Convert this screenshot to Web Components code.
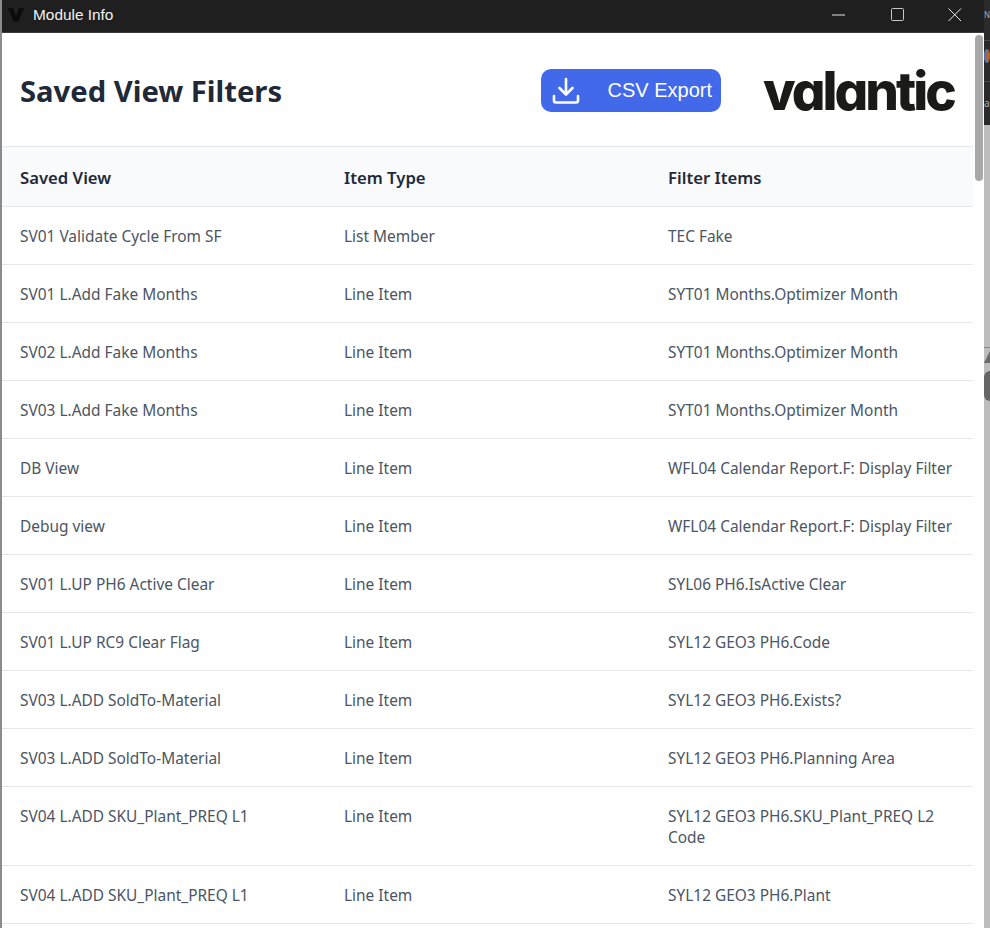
<!DOCTYPE html>
<html><head><meta charset="utf-8"><style>
html,body{margin:0;height:100%;overflow:hidden;background:#bdbdbd}
body{display:flex}
</style></head><body>
<module-window>
<saved-header></saved-header>
<filter-table>
<filter-row head a="Saved View" b="Item Type" c="Filter Items"></filter-row>
<filter-row a="SV01 Validate Cycle From SF" b="List Member" c="TEC Fake"></filter-row>
<filter-row a="SV01 L.Add Fake Months" b="Line Item" c="SYT01 Months.Optimizer Month"></filter-row>
<filter-row a="SV02 L.Add Fake Months" b="Line Item" c="SYT01 Months.Optimizer Month"></filter-row>
<filter-row a="SV03 L.Add Fake Months" b="Line Item" c="SYT01 Months.Optimizer Month"></filter-row>
<filter-row a="DB View" b="Line Item" c="WFL04 Calendar Report.F: Display Filter"></filter-row>
<filter-row a="Debug view" b="Line Item" c="WFL04 Calendar Report.F: Display Filter"></filter-row>
<filter-row a="SV01 L.UP PH6 Active Clear" b="Line Item" c="SYL06 PH6.IsActive Clear"></filter-row>
<filter-row a="SV01 L.UP RC9 Clear Flag" b="Line Item" c="SYL12 GEO3 PH6.Code"></filter-row>
<filter-row a="SV03 L.ADD SoldTo-Material" b="Line Item" c="SYL12 GEO3 PH6.Exists?"></filter-row>
<filter-row a="SV03 L.ADD SoldTo-Material" b="Line Item" c="SYL12 GEO3 PH6.Planning Area"></filter-row>
<filter-row a="SV04 L.ADD SKU_Plant_PREQ L1" b="Line Item" c="SYL12 GEO3 PH6.SKU_Plant_PREQ L2 Code"></filter-row>
<filter-row a="SV04 L.ADD SKU_Plant_PREQ L1" b="Line Item" c="SYL12 GEO3 PH6.Plant"></filter-row>
</filter-table>
</module-window>
<desktop-strip></desktop-strip>
<script>
const F='"Noto Sans","Open Sans",sans-serif';
class ModuleWindow extends HTMLElement{constructor(){super();this.attachShadow({mode:'open'}).innerHTML=`<style>
:host{display:block;flex:none;width:984px;height:928px;overflow:hidden;background:#fff;border-left:2px solid #8c8c8c;box-sizing:border-box;font-family:${F}}
.bar{height:33px;box-sizing:border-box;background:#1f1f1f;border-bottom:1px solid #3a3a3a;display:flex;align-items:center;margin-left:-2px;color:#f2f2f2;font:15.4px/20px "Liberation Sans",sans-serif;padding-bottom:2px}
.logo{margin:0 9px 0 8px;width:16px;height:16px;display:block}
.title{flex:1}
.ctl{width:58px;display:flex;justify-content:center}
.body{display:flex;height:895px}
.main{width:971px;flex:none;overflow:hidden}
.track{flex:1;position:relative}
.thumb{position:absolute;left:2px;top:2px;width:8px;height:146px;background:#a8a8a8;border-radius:4px}
</style>
<div class="bar"><svg class="logo" viewBox="0 0 16 16"><path d="M0 1h5l3 8 3-8h5l-6 14H6z" fill="#0c0c0c"/></svg><span class="title">Module Info</span>
<span class="ctl"><svg width="14" height="14"><path d="M0 7h13" stroke="#e6e6e6"/></svg></span>
<span class="ctl"><svg width="14" height="14"><rect x="1.500" y=".5" width="12" height="12" rx="1" fill="none" stroke="#c8c8c8"/></svg></span>
<span class="ctl"><svg width="14" height="14"><path d="M.5.5l12.500 12.500M13 .5L.5 13" stroke="#eee" fill="none"/></svg></span></div>
<div class="body"><div class="main"><slot></slot></div><div class="track"><div class="thumb"></div></div></div>`}}
customElements.define('module-window',ModuleWindow);
class SavedHeader extends HTMLElement{constructor(){super();this.attachShadow({mode:'open'}).innerHTML=`<style>
:host{display:flex;align-items:center;height:113px;padding:2px 19px 0 18px;box-sizing:border-box}
h1{margin:0;font:700 29.2px/36px ${F};color:#1f2937;flex:1}
.btn{width:180px;height:43px;box-sizing:border-box;background:#4169e9;border-radius:10px;color:#fff;display:flex;align-items:center;padding:0 9px 0 11px;font:20px "Liberation Sans",sans-serif;justify-content:space-between;margin-right:42px}
.logo{font:800 53px/60px Inter,sans-serif;font-feature-settings:"cv11" 1;letter-spacing:-3px;color:#1a1a18;width:191px;margin-top:1px;white-space:nowrap}
</style><h1>Saved View Filters</h1>
<div class="btn"><svg width="28" height="28" viewBox="0 0 28 28" fill="none" stroke="#fff" stroke-width="2.6" stroke-linecap="round" stroke-linejoin="round"><path d="M14 2v15M7.500 11l6.500 6.500L20.500 11M2 19v4.500a2 2 0 0 0 2 2h20a2 2 0 0 0 2-2V19"/></svg><span>CSV Export</span></div>
<div class="logo">valantic</div>`}}
customElements.define('saved-header',SavedHeader);
class FilterTable extends HTMLElement{constructor(){super();this.attachShadow({mode:'open'}).innerHTML=`<style>:host{display:block;border-top:1px solid #e5e7eb}</style><slot></slot>`}}
customElements.define('filter-table',FilterTable);
class FilterRow extends HTMLElement{connectedCallback(){if(this.shadowRoot)return;const h=this.hasAttribute('head');this.attachShadow({mode:'open'}).innerHTML=`<style>
:host{display:grid;grid-template-columns:324px 324px 323px;border-bottom:1px solid #e5e7eb;background:${h?'#f9fafb':'#fff'}}
div{padding:${h?'20px 18px 18px':'19px 18px 17px'};font:${h?'600 16.7px/21px':'15.45px/21px'} ${F};color:${h?'#1f2937':'#4b5563'}}
</style><div>${this.getAttribute('a')}</div><div>${this.getAttribute('b')}</div><div>${this.getAttribute('c')}</div>`}}
customElements.define('filter-row',FilterRow);
class DesktopStrip extends HTMLElement{constructor(){super();this.attachShadow({mode:'open'}).innerHTML=`<style>
:host{display:flex;flex-direction:column;flex:1;min-width:0;overflow:hidden;background:#bdbdbd;box-sizing:border-box;font:8px/20px "Noto Sans",sans-serif}
.dark{height:125px;flex:none;background:#2a2a2a;color:#aaa;display:flex;flex-direction:column}
.dark div{height:41px;flex:none;box-sizing:border-box;border-bottom:1px solid #4a4a4a;padding-top:5px;overflow:hidden}
.dark div:last-child{border:0;padding-top:11px;font-size:10px}
.dot{width:6px;height:14px;border-radius:50%;background:#b5643a;box-shadow:inset 2px 0 #3a78c8;margin-top:3px;display:block}
.gap{height:222px;flex:none;border-bottom:1px solid #8a8a8a}
.tri{width:0;height:0;border-bottom:12px solid #6a6a6a;border-left:6px solid transparent;margin-top:3px}
.blob{width:6px;height:30px;background:#666;border-radius:6px 0 0 6px;margin-top:8px}
</style><div class="dark"><div>N</div><div><span class="dot"></span></div><div>a</div></div><div class="gap"></div><div class="tri"></div><div class="blob"></div>`}}
customElements.define('desktop-strip',DesktopStrip);
</script></body></html>
